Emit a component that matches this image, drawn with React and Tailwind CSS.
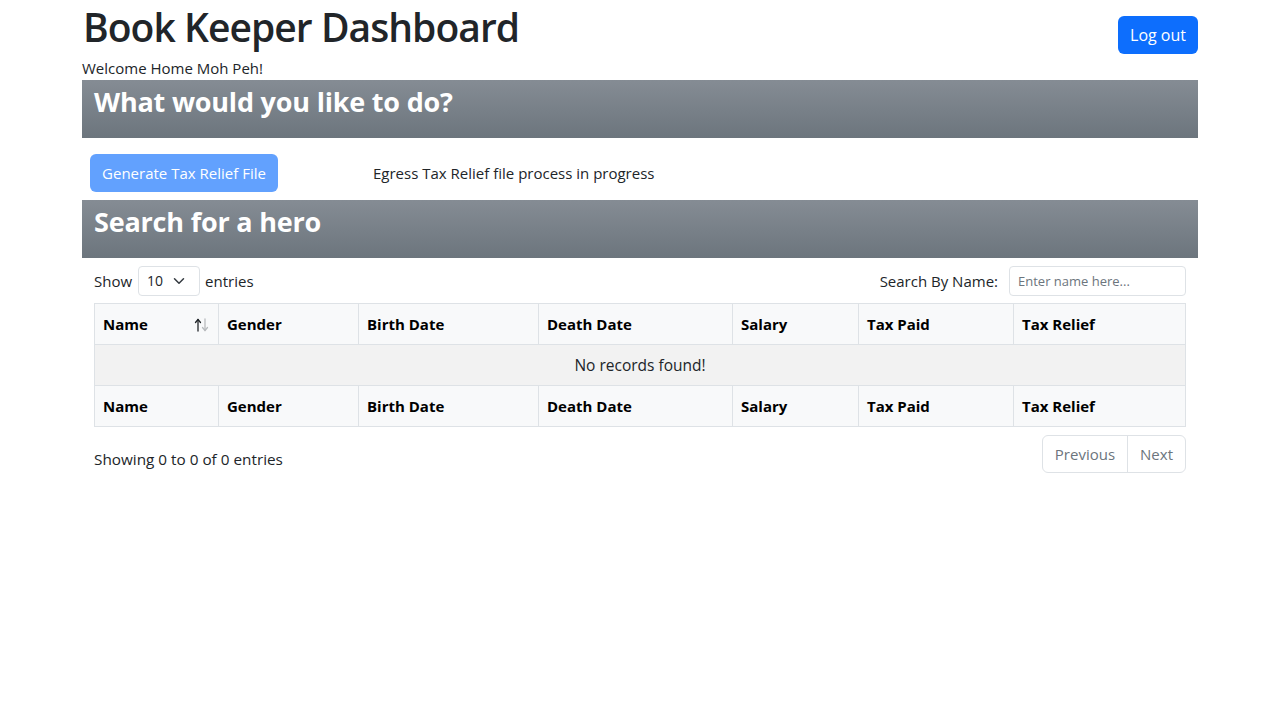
import React from "react";

const cols = [
  { label: "Name", w: "w-[124px]" },
  { label: "Gender", w: "w-[140px]" },
  { label: "Birth Date", w: "w-[180px]" },
  { label: "Death Date", w: "w-[194px]" },
  { label: "Salary", w: "w-[126px]" },
  { label: "Tax Paid", w: "w-[155px]" },
  { label: "Tax Relief", w: "" },
];

function SortIcon() {
  return (
    <svg
      className="absolute right-[9px] top-[14px]"
      width="15"
      height="14"
      viewBox="0 0 15 14"
      fill="none"
      strokeWidth="1.3"
      strokeLinecap="round"
      strokeLinejoin="round"
    >
      <g stroke="#212529">
        <path d="M4 13V1.5" />
        <path d="M1.5 4.5L4 1.5l2.5 3" />
      </g>
      <g stroke="#b8bbbe">
        <path d="M11 1v11.5" />
        <path d="M8.5 9.5L11 12.5l2.5-3" />
      </g>
    </svg>
  );
}

function HeadRow({ sort }) {
  return (
    <tr className="bg-[#f8f9fa]">
      {cols.map((c, i) => (
        <th
          key={c.label}
          className={`${c.w} h-[41px] border border-[#dee2e6] px-2 text-left font-bold text-black text-[15px] leading-6 relative`}
        >
          {c.label}
          {sort && i === 0 && <SortIcon />}
        </th>
      ))}
    </tr>
  );
}

export default function App() {
  return (
    <div
      className="w-full min-h-[720px] bg-white text-[#212529] text-[15px] leading-6"
      style={{ fontFamily: '"Open Sans", "Noto Sans", sans-serif' }}
    >
      <div className="w-[1116px] mx-auto">
        <div className="flex justify-between items-start">
          <div>
            <h1 className="text-[39px] leading-[53px] font-semibold mb-[3px] tracking-[-0.95px] pl-px">
              Book Keeper Dashboard
            </h1>
            <div className="text-[15px]">Welcome Home Moh Peh!</div>
          </div>
          <button className="mt-4 h-[38px] px-3 rounded-[6px] bg-[#0d6efd] text-white text-[16px] leading-6">
            Log out
          </button>
        </div>

        <div className="h-[58px] px-3 flex items-center bg-[linear-gradient(180deg,#858c94,#6c757d)]">
          <h3 className="text-[27px] font-bold text-white leading-[34px] -mt-[14px] tracking-[-0.2px]">
            What would you like to do?
          </h3>
        </div>

        <div className="flex items-center mt-4 mb-2 h-[38px]">
          <button className="ml-2 h-[38px] w-[188px] rounded-[6px] bg-[#62a1fe] text-white text-[15px] leading-6">
            Generate Tax Relief File
          </button>
          <div className="ml-[95px] text-[15px]">Egress Tax Relief file process in progress</div>
        </div>

        <div className="h-[58px] px-3 flex items-center bg-[linear-gradient(180deg,#858c94,#6c757d)]">
          <h3 className="text-[27px] font-bold text-white leading-[34px] -mt-[14px] tracking-[-0.2px]">
            Search for a hero
          </h3>
        </div>

        <div className="px-3 pt-2">
          <div className="flex justify-between items-center h-[30px]">
            <div className="flex items-center text-[15px]">
              <span>Show</span>
              <div className="ml-[6px] mr-[5px] w-[62px] h-[30px] border border-[#dee2e6] rounded-[4px] flex items-center pl-2 pr-[14px] justify-between text-[14px]">
                <span>10</span>
                <svg width="12" height="12" viewBox="0 0 16 16" fill="none" stroke="#343a40" strokeWidth="2" strokeLinecap="round" strokeLinejoin="round">
                  <path d="M2 5l6 6 6-6" />
                </svg>
              </div>
              <span>entries</span>
            </div>
            <div className="flex items-center text-[15px]">
              <span className="mr-[11px]">Search By Name:</span>
              <div className="w-[177px] h-[30px] border border-[#dee2e6] rounded-[4px] flex items-center px-2 text-[13px] text-[#6c757d]">
                Enter name here...
              </div>
            </div>
          </div>

          <table className="w-full mt-[7px] border-collapse border border-[#dee2e6] table-fixed">
            <thead>
              <HeadRow sort />
            </thead>
            <tbody>
              <tr className="bg-[#f2f2f2]">
                <td colSpan={7} className="h-[41px] border border-[#dee2e6] text-center text-[15.5px]">
                  No records found!
                </td>
              </tr>
            </tbody>
            <tfoot>
              <HeadRow />
            </tfoot>
          </table>

          <div className="flex justify-between items-start mt-2">
            <div className="pt-[12px] text-[15.3px]">Showing 0 to 0 of 0 entries</div>
            <div className="flex h-[38px] border border-[#dee2e6] rounded-[6px] text-[15px] text-[#6c757d]">
              <div className="px-3 flex items-center border-r border-[#dee2e6]">Previous</div>
              <div className="px-3 flex items-center">Next</div>
            </div>
          </div>
        </div>
      </div>
    </div>
  );
}
